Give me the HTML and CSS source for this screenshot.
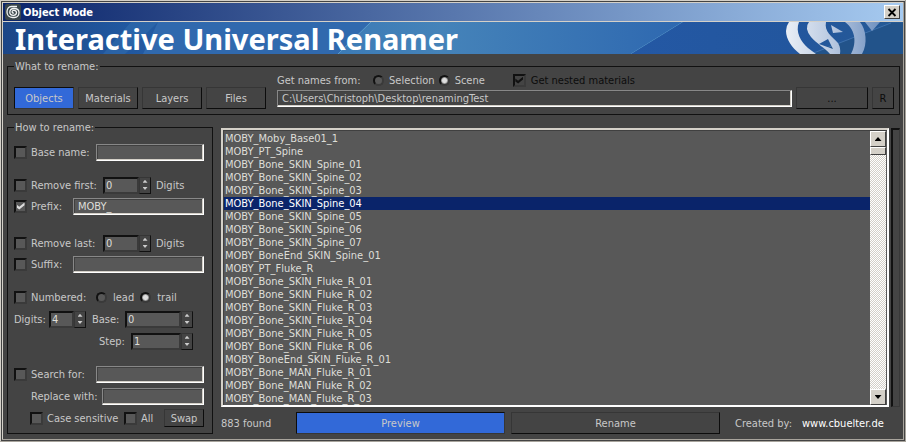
FILE: index.html
```html
<!DOCTYPE html>
<html lang="en">
<head>
<meta charset="utf-8">
<title>Object Mode</title>
<link rel="stylesheet" href="styles.css">
</head>
<body>
<main class="window">
  <header class="titlebar">
    <svg class="app-icon" viewBox="0 0 16 16" aria-hidden="true">
      <rect width="16" height="16" rx="2" fill="#39454b"/>
      <path d="M12 2.500H6.500C3.500 2.500 2 5 2 8s2 5.500 5.500 5.500h2C12 13.500 14 11.500 14 8.500S12 4.500 9 4.500 4.800 6 4.800 8.300 6.500 11.300 8.500 11.300s3-1 3-2.700-1.200-2.300-2.600-2.300S7 7.200 7.200 8.200s1.300 1 1.800.6" fill="none" stroke="#f2f4f4" stroke-width="1.300"/>
    </svg>
    <h1 class="title">Object Mode</h1>
    <button class="close" aria-label="Close">
      <svg viewBox="0 0 10 9" aria-hidden="true"><path d="M1.500 1l7 7M8.500 1l-7 7" stroke="#000" stroke-width="1.800"/></svg>
    </button>
  </header>

  <div class="banner">
    <svg class="banner-art" viewBox="0 0 900 32" preserveAspectRatio="none" aria-hidden="true">
      <defs>
        <linearGradient id="base"><stop offset="0" stop-color="#1c4687"/><stop offset=".14" stop-color="#2158a0"/><stop offset=".34" stop-color="#2b68ae"/><stop offset="1" stop-color="#2b68ae"/></linearGradient>
        <linearGradient id="mid"><stop offset="0" stop-color="#3c7bb6"/><stop offset=".3" stop-color="#4583b9"/><stop offset="1" stop-color="#2e68b0"/></linearGradient>
        <linearGradient id="end"><stop offset="0" stop-color="#2458a4"/><stop offset=".6" stop-color="#22569e"/><stop offset="1" stop-color="#265a94"/></linearGradient>
        <linearGradient id="logo" gradientUnits="userSpaceOnUse" x1="783" y1="0" x2="877" y2="0"><stop offset="0" stop-color="#eaeff6"/><stop offset=".5" stop-color="#b8c8e0"/><stop offset="1" stop-color="#6f91c0"/></linearGradient>
      </defs>
      <rect width="900" height="32" fill="url(#base)"/>
      <path d="M128 0H155L122 32H100Z" fill="#3470b0" opacity=".5"/>
      <path d="M155 0H368L335 32H140Z" fill="#3069ae"/>
      <path d="M368 0H680L628 32H335Z" fill="url(#mid)"/>
      <path d="M368 0L335 32M680 0L628 32" stroke="#5b9bcb" fill="none"/>
      <path d="M680 0H900V32H628Z" fill="url(#end)"/>
      <path d="M808 32L888 1H900V32Z" fill="#22538a"/>
      <path d="M808 32L888 1" stroke="#4a7db8" stroke-width=".7"/>
      <g fill="url(#logo)">
        <path d="M786 0H796C792 10 798 20 805 26L813 32H797C789 26 783 17 783 9Q783 4 786 0Z"/>
        <path fill-rule="evenodd" d="M806 0H823C821 10 829 14 835 21Q838 26 837 32H827C822 26 814 22 808 15Q801 6 806 0ZM816 22L825 17 830 27Z"/>
        <path d="M828 3L840 10 830 11Z"/>
        <path d="M842 0H857C863 7 865 22 859 32H848C853 23 854 9 842 0Z"/>
        <path d="M862 0H877L869 9Z"/>
      </g>
    </svg>
    <h2 class="banner-text">Interactive Universal Renamer</h2>
  </div>

  <div class="content">
    <fieldset class="group what">
      <legend>What to rename:</legend>
      <div class="types">
        <button class="btn active">Objects</button>
        <button class="btn">Materials</button>
        <button class="btn">Layers</button>
        <button class="btn">Files</button>
      </div>
      <div class="source">
        <div class="source-options">
          <span class="source-label">Get names from:</span>
          <input type="radio" name="source" id="selection"><label for="selection">Selection</label>
          <input type="radio" name="source" id="scene" checked><label for="scene">Scene</label>
          <input type="checkbox" class="nested dim" id="nested" checked><label class="dim-text" for="nested">Get nested materials</label>
        </div>
        <div class="path-row">
          <input class="field path" aria-label="Path" value="C:\Users\Christoph\Desktop\renamingTest">
          <button class="btn browse dim-text">...</button>
          <button class="btn reset dim-text">R</button>
        </div>
      </div>
    </fieldset>

    <div class="columns">
      <fieldset class="group how">
        <legend>How to rename:</legend>
        <div class="row">
          <input type="checkbox" id="base-on"><label class="w-base" for="base-on">Base name:</label>
          <input class="field" aria-label="Base name">
        </div>
        <div class="row section">
          <input type="checkbox" id="first-on"><label class="w-remove" for="first-on">Remove first:</label>
          <span class="spinner w-mid"><input aria-label="Digits to remove first" value="0"><span class="arrows"><button aria-label="Up"></button><button class="down" aria-label="Down"></button></span></span>
          <span class="unit">Digits</span>
        </div>
        <div class="row">
          <input type="checkbox" id="prefix-on" checked><label class="w-fix" for="prefix-on">Prefix:</label>
          <input class="field" aria-label="Prefix" value="MOBY_">
        </div>
        <div class="row section wide">
          <input type="checkbox" id="last-on"><label class="w-remove" for="last-on">Remove last:</label>
          <span class="spinner w-mid"><input aria-label="Digits to remove last" value="0"><span class="arrows"><button aria-label="Up"></button><button class="down" aria-label="Down"></button></span></span>
          <span class="unit">Digits</span>
        </div>
        <div class="row">
          <input type="checkbox" id="suffix-on"><label class="w-fix" for="suffix-on">Suffix:</label>
          <input class="field" aria-label="Suffix">
        </div>
        <div class="row section">
          <input type="checkbox" id="num-on"><label class="w-base" for="num-on">Numbered:</label>
          <input type="radio" name="place" id="lead"><label for="lead">lead</label>
          <input type="radio" name="place" id="trail" checked><label for="trail">trail</label>
        </div>
        <div class="row sub">
          <label class="w-digits" for="digits">Digits:</label>
          <span class="spinner w-small"><input id="digits" value="4"><span class="arrows"><button aria-label="Up"></button><button class="down" aria-label="Down"></button></span></span>
          <label class="w-start" for="start">Base:</label>
          <span class="spinner w-large"><input id="start" value="0"><span class="arrows"><button aria-label="Up"></button><button class="down" aria-label="Down"></button></span></span>
        </div>
        <div class="row sub step">
          <label class="w-step" for="step">Step:</label>
          <span class="spinner w-step-box"><input id="step" value="1"><span class="arrows"><button aria-label="Up"></button><button class="down" aria-label="Down"></button></span></span>
        </div>
        <div class="row section">
          <input type="checkbox" id="search-on"><label class="w-base" for="search-on">Search for:</label>
          <input class="field" aria-label="Search for">
        </div>
        <div class="row sub replace">
          <label class="w-replace" for="replace">Replace with:</label>
          <input class="field" id="replace">
        </div>
        <div class="row sub options">
          <input type="checkbox" id="case"><label class="w-case" for="case">Case sensitive</label>
          <input type="checkbox" id="all"><label for="all">All</label>
          <button class="btn swap">Swap</button>
        </div>
      </fieldset>

      <div class="results">
        <div class="list-row">
          <div class="listbox">
            <select class="names" size="21" aria-label="Names">
              <option>MOBY_Moby_Base01_1</option>
              <option>MOBY_PT_Spine</option>
              <option>MOBY_Bone_SKIN_Spine_01</option>
              <option>MOBY_Bone_SKIN_Spine_02</option>
              <option>MOBY_Bone_SKIN_Spine_03</option>
              <option selected>MOBY_Bone_SKIN_Spine_04</option>
              <option>MOBY_Bone_SKIN_Spine_05</option>
              <option>MOBY_Bone_SKIN_Spine_06</option>
              <option>MOBY_Bone_SKIN_Spine_07</option>
              <option>MOBY_BoneEnd_SKIN_Spine_01</option>
              <option>MOBY_PT_Fluke_R</option>
              <option>MOBY_Bone_SKIN_Fluke_R_01</option>
              <option>MOBY_Bone_SKIN_Fluke_R_02</option>
              <option>MOBY_Bone_SKIN_Fluke_R_03</option>
              <option>MOBY_Bone_SKIN_Fluke_R_04</option>
              <option>MOBY_Bone_SKIN_Fluke_R_05</option>
              <option>MOBY_Bone_SKIN_Fluke_R_06</option>
              <option>MOBY_BoneEnd_SKIN_Fluke_R_01</option>
              <option>MOBY_Bone_MAN_Fluke_R_01</option>
              <option>MOBY_Bone_MAN_Fluke_R_02</option>
              <option>MOBY_Bone_MAN_Fluke_R_03</option>
            </select>
            <div class="scrollbar">
              <button class="scroll-btn" aria-label="Scroll up"></button>
              <div class="thumb"></div>
              <button class="scroll-btn down" aria-label="Scroll down"></button>
            </div>
          </div>
          <div class="progress"></div>
        </div>
        <footer class="footer">
          <span class="count">883 found</span>
          <button class="btn action active">Preview</button>
          <button class="btn action">Rename</button>
          <span class="credit">Created by:</span>
          <a class="site" href="#">www.cbuelter.de</a>
        </footer>
      </div>
    </div>
  </div>
</main>
</body>
</html>
```

FILE: styles.css
```css
* { box-sizing: border-box; }

body {
  margin: 0;
  background: #444;
  color: #c8c8c8;
  font: 11px/13px "DejaVu Sans Condensed", "DejaVu Sans", sans-serif;
  font-stretch: condensed;
}

input, button, select {
  margin: 0;
  font: inherit;
  color: inherit;
  border-radius: 0;
  outline: 0;
}

.window {
  min-height: 100vh;
  border: 3px double #d4d0c8;
  border-color: #d4d0c8 #a8a49c #a8a49c #d4d0c8;
  background: #444;
}

.titlebar {
  display: flex;
  align-items: center;
  height: 19px;
  padding: 0 3px 0 2px;
  border-bottom: 1px solid #d4d0c8;
  background: linear-gradient(90deg, #0a246a, #a6caf0);
}
.app-icon { width: 16px; height: 16px; }
.title {
  flex: 1;
  margin: 0 0 0 2px;
  color: #fff;
  font-size: 11px;
  font-weight: bold;
}
.close {
  display: grid;
  place-items: center;
  width: 16px;
  height: 14px;
  padding: 0;
  border: 1px solid;
  border-color: #fff #404040 #404040 #fff;
  background: #d4d0c8;
}
.close svg { width: 10px; height: 9px; }

.banner { display: grid; grid-template-rows: 32px; }
.banner-art, .banner-text { grid-area: 1 / 1; }
.banner-art { width: 100%; height: 32px; }
.banner-text {
  z-index: 1;
  margin: 0;
  padding-left: 12px;
  color: #fff;
  font: bold 29px/34px "Noto Sans", "Open Sans", sans-serif;
  white-space: nowrap;
}

.content { padding: 6px 3px 5px 4px; }

.group { min-width: 0; margin: 0; border: 1px solid #111; }
.group legend { padding: 0 1px; }

.what {
  display: flex;
  gap: 11px;
  padding: 0 5px 5px 6px;
}
.types { display: flex; gap: 4px; padding-top: 14px; }
.btn {
  height: 22px;
  padding: 0;
  border: 1px solid;
  border-color: #363636 #0c0c0c #0c0c0c #363636;
  background: #444;
  text-align: center;
}
.btn.active {
  border-color: #0c0c0c #363636 #363636 #0c0c0c;
  background: #3269d8;
}
.types .btn { width: 60px; }
.source { flex: 1; }
.source-options { display: flex; align-items: center; height: 14px; }
.source-label { width: 96px; }
.source-options label { margin: 0 4px 0 5px; }
.path-row { display: flex; align-items: center; gap: 4px; }
.path { flex: 1; }
.path.field { background: #444; }
.browse { width: 72px; }
.reset { width: 22px; }
.dim-text { color: #0c0c0c; }

input[type="radio"], input[type="checkbox"] { appearance: none; flex: none; }
input[type="radio"] {
  width: 11px;
  height: 11px;
  border: 2px solid;
  border-color: #111 #3a3a3a #3a3a3a #111;
  border-radius: 50%;
  background: #585858;
}
input[type="radio"]:checked { background: radial-gradient(circle, #ddd 2px, #585858 4px); }
input[type="checkbox"] {
  display: grid;
  place-items: center;
  width: 13px;
  height: 13px;
  border: 2px solid;
  border-color: #111 #3a3a3a #3a3a3a #111;
  background: #585858;
}
input[type="checkbox"]:checked::before {
  content: "";
  width: 8px;
  height: 7px;
  background: #ddd;
  clip-path: polygon(0 30%, 35% 60%, 100% 0, 100% 40%, 35% 100%, 0 70%);
}
input.dim[type="checkbox"] { background: #444; }
input.dim[type="checkbox"]:checked::before { background: #111; }
.nested { margin-left: 24px; }

.field {
  flex: 1;
  min-width: 0;
  height: 17px;
  padding: 0 4px;
  border: 1px solid;
  border-color: #888 #fff #fff #888;
  background: #585858;
  box-shadow: inset -1px -1px #d4d0c8, inset 1px 1px #404040;
}

.columns { display: flex; gap: 8px; margin-top: 6px; }
.how { width: 206px; padding: 6px 8px 5px 6px; }
.how input { color: #deded8; }
.row { display: flex; align-items: center; height: 18px; margin-top: 3px; }
.row.sub { margin-top: 4px; }
.row.section { margin-top: 15px; }
.row.section.wide { margin-top: 19px; }
.row input[type="checkbox"] { margin-right: 4px; }
.w-base { width: 65px; }
.w-remove { width: 72px; }
.w-fix { width: 42px; }
.w-digits { width: 35px; }
.w-start { width: 33px; }
.w-step { width: 32px; }
.w-replace { width: 71px; }
.w-case { width: 77px; }
.row input[type="radio"] { margin-right: 6px; }
.row input[type="radio"] + label { margin-right: 6px; }
.unit { margin-left: 5px; }
.step { padding-left: 85px; }
.replace { padding-left: 17px; }
.options { padding-left: 16px; }
.row .swap { width: 40px; height: 18px; margin-left: auto; }

.spinner { display: flex; height: 17px; }
.spinner > input {
  flex: 1;
  min-width: 0;
  padding: 0 1px;
  border: 2px solid;
  border-color: #111 #3a3a3a #3a3a3a #111;
  background: #585858;
}
.w-mid { width: 48px; }
.w-small { width: 37px; margin-right: 6px; }
.w-large { width: 68px; }
.w-step-box { width: 62px; }
.arrows {
  display: flex;
  flex-direction: column;
  width: 12px;
  border: 1px solid;
  border-color: #363636 #111 #111 #363636;
}
.arrows button {
  display: grid;
  place-items: center;
  flex: 1;
  padding: 0;
  border: 0;
  background: #444;
}
.arrows button::before {
  content: "";
  width: 5px;
  height: 3px;
  background: #ccc;
  clip-path: polygon(50% 0, 100% 100%, 0 100%);
}
.arrows .down::before { transform: scaleY(-1); }

.results { flex: 1; min-width: 0; padding-top: 7px; }
.list-row { display: flex; gap: 2px; }
.listbox {
  display: flex;
  flex: 1;
  border: 2px solid;
  border-color: #d4d0c8 #fff #fff #d4d0c8;
  background: #585858;
  box-shadow: inset 1px 1px #404040;
}
.names {
  flex: 1;
  height: 275px;
  padding: 2px 0 0 1px;
  border: 0;
  appearance: none;
  background: none;
  overflow: hidden;
  color: #deded8;
}
.names option { min-height: 13px; height: 13px; padding: 0 1px; line-height: 13px; }
.names option:checked {
  color: #fff;
  background: #0a246a linear-gradient(#0a246a, #0a246a);
}
.scrollbar {
  display: flex;
  flex-direction: column;
  width: 16px;
  margin: 1px 1px 0 0;
  background: repeating-conic-gradient(#fff 0 25%, #d4d0c8 0 50%) 0 0 / 2px 2px;
}
.scroll-btn, .thumb {
  border: 1px solid;
  border-color: #fff #404040 #404040 #fff;
  background: #d4d0c8;
}
.scroll-btn { display: grid; place-items: center; height: 16px; padding: 0; }
.scroll-btn::before {
  content: "";
  width: 7px;
  height: 4px;
  background: #000;
  clip-path: polygon(50% 0, 100% 100%, 0 100%);
}
.scroll-btn.down { margin-top: auto; }
.scroll-btn.down::before { transform: scaleY(-1); }
.thumb { height: 8px; }
.progress {
  width: 9px;
  border: 1px solid;
  border-color: #111 #383838 #383838 #111;
  border-width: 2px 1px 1px 2px;
}

.footer { display: flex; align-items: center; margin-top: 5px; }
.count { width: 75px; }
.action { flex: 1; max-width: 209px; margin-right: 6px; }
.credit { margin-left: 9px; }
.site { margin-left: 10px; color: #fff; text-decoration: none; }
```
